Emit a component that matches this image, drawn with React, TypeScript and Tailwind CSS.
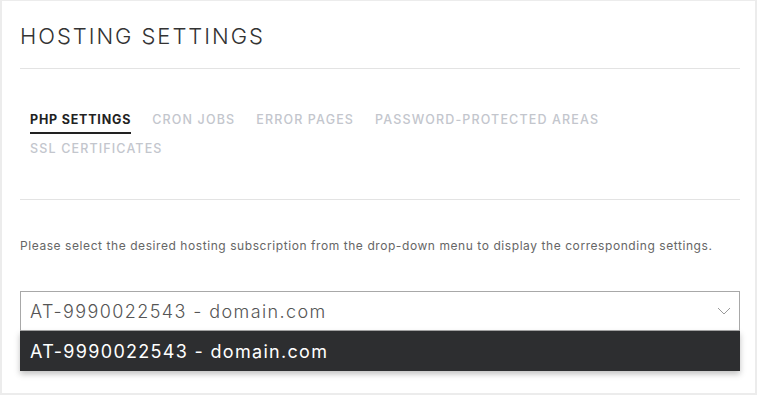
import React from "react";

export default function App() {
  const tabs = ["CRON JOBS", "ERROR PAGES", "PASSWORD-PROTECTED AREAS"];
  return (
    <div className="w-[759px] h-[395px] bg-white" style={{ fontFamily: "Inter, 'Noto Sans', sans-serif" }}>
      <div className="w-[757px] h-[395px] border-2 border-t border-[#ececec] pl-[18px]">
        <div className="w-[720px]">
          <h1 className="pt-[20px] h-[67px] text-[22px] leading-[30px] font-light tracking-[1.95px] text-[#333]">
            HOSTING SETTINGS
          </h1>
          <div className="h-px bg-[#e3e3e3]" />
          <div className="px-[10px] pt-[41px] h-[130px]">
            <div className="flex flex-wrap gap-x-[21px] gap-y-[5px] text-[12.5px] font-semibold leading-[20px]">
              <div className="border-b-2 border-[#222] text-[#222] font-bold pb-[2px] tracking-[0.8px]">PHP SETTINGS</div>
              {tabs.map((t) => (
                <div key={t} className="text-[#c3c6cd] font-medium tracking-[1.15px]">{t}</div>
              ))}
              <div className="text-[#c3c6cd] font-medium tracking-[1.15px] w-full">SSL CERTIFICATES</div>
            </div>
          </div>
          <div className="h-px bg-[#e3e3e3]" />
          <p className="mt-[37px] text-[12px] leading-[18px] tracking-[0.57px] text-[#666]">
            Please select the desired hosting subscription from the drop-down menu to display the corresponding settings.
          </p>
          <div className="mt-[36px] relative">
            <div className="h-[40px] border border-[#a8a8a8] flex items-center justify-between pl-[9px] pr-[8px]">
              <span className="text-[18px] font-light text-[#555] tracking-[1.4px]">AT-9990022543 - domain.com</span>
              <svg width="14" height="8" viewBox="0 0 14 8" fill="none">
                <path d="M1 1l6 6 6-6" stroke="#9a9a9a" strokeWidth="1" />
              </svg>
            </div>
            <div className="h-[40px] bg-[#2d2e30] flex items-center pl-[10px] shadow-[0_3px_6px_rgba(0,0,0,0.25)]">
              <span className="text-[18px] font-normal text-white tracking-[1.3px]">AT-9990022543 - domain.com</span>
            </div>
          </div>
        </div>
      </div>
    </div>
  );
}
